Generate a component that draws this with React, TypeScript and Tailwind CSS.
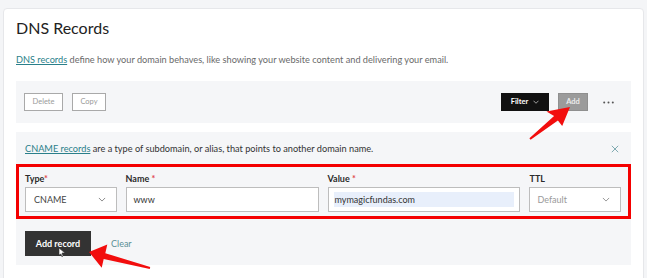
import React from 'react';

const ChevronDown = ({ className = '' }: { className?: string }) => (
  <svg className={className} viewBox="0 0 12 8" fill="none" stroke="currentColor" strokeWidth={1.2}>
    <path d="M1 1.5l5 5 5-5" />
  </svg>
);

export default function App() {
  return (
    <div className="relative w-[647px] h-[278px] overflow-hidden bg-[#f4f5f7] pt-2 px-[3px] font-['Lato',sans-serif]">
      {/* Card */}
      <div className="h-[290px] rounded-sm border border-[#e6e7ea] bg-white px-3">
        <h1 className="pt-[9px] text-[16px] leading-[20px] text-[#222]">DNS Records</h1>
        <p className="mt-[16px] text-[9.2px] leading-[12px] text-[#6a6a6a]">
          <span className="text-[#2a7f8a] underline">DNS records</span> define how your domain behaves, like showing your
          website content and delivering your email.
        </p>

        {/* Toolbar */}
        <div className="mt-[15px] flex h-[42px] items-center bg-[#f5f6f8] px-2">
          <button className="h-[18px] w-[39px] border border-[#a9a9a9] bg-white text-[7.5px] text-[#9a9a9a]">Delete</button>
          <button className="ml-[9px] h-[18px] w-[34px] border border-[#a9a9a9] bg-white text-[7.5px] text-[#9a9a9a]">Copy</button>
          <div className="flex-1" />
          <button className="flex h-[18px] w-[48px] items-center justify-center gap-[5px] bg-[#111] text-[7.5px] font-bold text-white">
            Filter <ChevronDown className="w-[6px] h-[4px]" />
          </button>
          <button className="ml-[9px] h-[18px] w-[30px] border border-[#8f8f8f] bg-[#9b9b9b] text-[7.5px] font-bold text-[#ececec]">Add</button>
          <svg className="ml-[15px] mr-[9px] w-[11px] h-[3px] text-[#555]" viewBox="0 0 11 3" fill="currentColor">
            <circle cx="1.2" cy="1.5" r="1" />
            <circle cx="5.5" cy="1.5" r="1" />
            <circle cx="9.8" cy="1.5" r="1" />
          </svg>
        </div>

        {/* Form panel */}
        <div className="mt-[9px] h-[133px] bg-[#f5f6f8]">
          <div className="flex h-[32px] items-center pl-[9px] pr-[12px] pt-[2px]">
            <p className="flex-1 text-[9.2px] text-[#333]">
              <span className="text-[#2a7f8a] underline">CNAME records</span> are a type of subdomain, or alias, that points to
              another domain name.
            </p>
            <svg className="w-[8px] h-[8px] text-[#7aa6ad]" viewBox="0 0 10 10" stroke="currentColor" strokeWidth={1.2}>
              <path d="M1 1l8 8M9 1l-8 8" />
            </svg>
          </div>

          <div className="flex h-[55px] gap-[9px] border-[3px] border-[#f40000] pl-[6px] pr-[7px] pt-[7px]">
            <div className="flex w-[92px] flex-col">
              <label className="h-[13px] text-[9px] font-bold leading-[10px] text-[#2b2b2b]">
                Type<span className="text-[#e0474c]">*</span>
              </label>
              <div className="flex h-[25px] items-center justify-between border border-[#bdbdbd] bg-white pl-[8px] pr-[10px] text-[9px] text-[#444]">
                CNAME <ChevronDown className="w-[8px] h-[5px] text-[#666]" />
              </div>
            </div>
            <div className="flex w-[194px] flex-col">
              <label className="h-[13px] text-[9px] font-bold leading-[10px] text-[#2b2b2b]">
                Name <span className="text-[#e0474c]">*</span>
              </label>
              <div className="flex h-[25px] items-center border border-[#bdbdbd] bg-white pl-[7px] text-[9px] text-[#333]">www</div>
            </div>
            <div className="flex w-[194px] flex-col">
              <label className="h-[13px] text-[9px] font-bold leading-[10px] text-[#2b2b2b]">
                Value <span className="text-[#e0474c]">*</span>
              </label>
              <div className="flex h-[25px] items-center border border-[#bdbdbd] bg-white px-[5px]">
                <div className="flex h-[15px] w-full items-center bg-[#e8effb] pl-[1px] text-[9px] text-[#333]">mymagicfundas.com</div>
              </div>
            </div>
            <div className="flex w-[92px] flex-col">
              <label className="h-[13px] text-[9px] font-bold leading-[10px] text-[#2b2b2b]">TTL</label>
              <div className="flex h-[25px] items-center justify-between border border-[#bdbdbd] bg-white pl-[7px] pr-[10px] text-[9px] text-[#9a9a9a]">
                Default <ChevronDown className="w-[8px] h-[5px] text-[#777]" />
              </div>
            </div>
          </div>

          <div className="mt-[12px] flex items-center pl-[9px]">
            <button className="h-[25px] w-[66px] bg-[#333] text-[9px] font-bold text-white">Add record</button>
            <span className="ml-[20px] text-[9px] text-[#5b8f96]">Clear</span>
          </div>
        </div>
      </div>

      {/* Red annotation arrows */}
      <svg className="pointer-events-none absolute left-0 top-0" width={647} height={278} viewBox="0 0 647 278">
        <polygon
          fill="#f20d0d"
          points="529.4,138.2 554.1,115.9 546.5,111.5 570,107 562.2,126 557.9,120.5 530.6,139.8"
        />
        <polygon
          fill="#f20d0d"
          points="150.2,267 105.3,253.2 107.3,244.5 89,252 101.7,267.7 103.7,259 149.8,269"
        />
        {/* cursor */}
        <path d="M59 248v7l2-1 1 3 1-1-1-3h3z" fill="#fff" stroke="#333" strokeWidth={0.6} />
      </svg>
    </div>
  );
}
